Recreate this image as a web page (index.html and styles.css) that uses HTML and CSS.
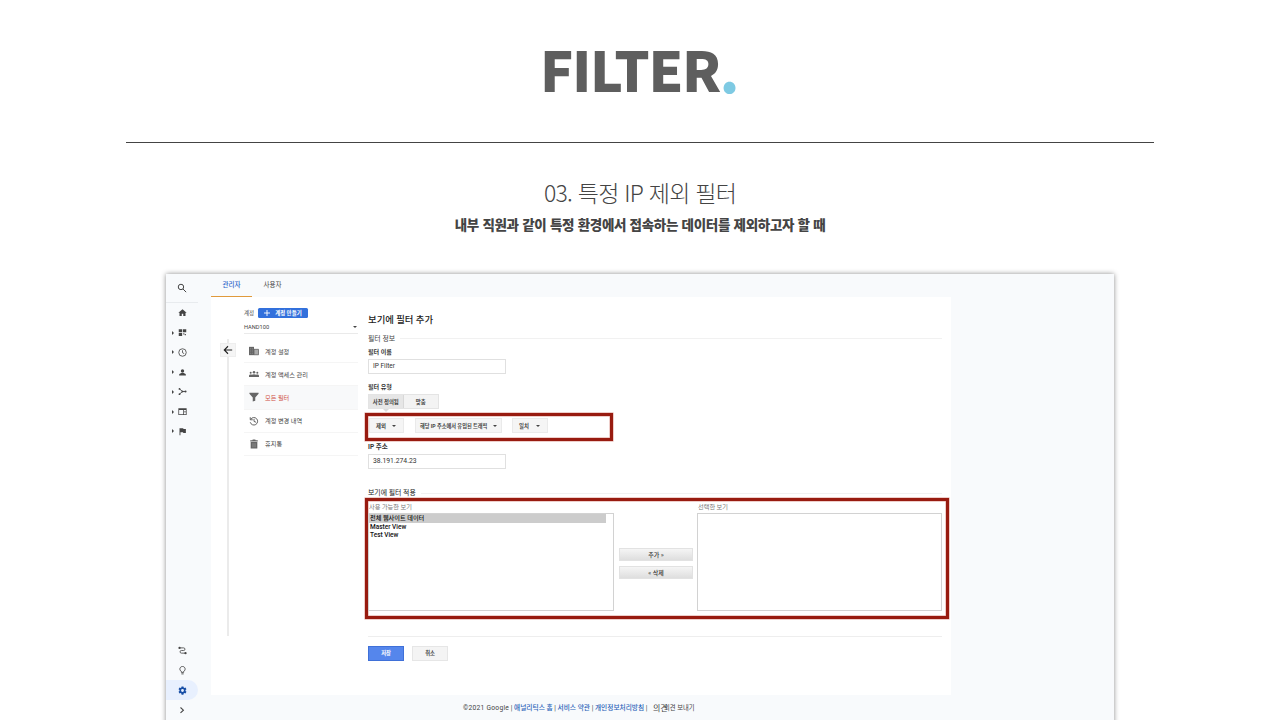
FILE: index.html
```html
<!DOCTYPE html>
<html lang="ko">
<head>
    <meta charset="UTF-8" />
    <meta name="viewport" content="width=device-width, initial-scale=1.0" />
    <title>FILTER</title>
    <link rel="stylesheet" href="styles.css">
</head>
<body>
    <header class="slide-header">
        <h1 class="slide-title">FILTER<span class="dot">.</span></h1>
    </header>
    <div class="slide-sub">
        <h2>03. 특정 IP 제외 필터</h2>
        <p>내부 직원과 같이 특정 환경에서 접속하는 데이터를 제외하고자 할 때</p>
    </div>

    <div class="app">
        <nav class="sidebar">
            <div class="side-search">
                <svg width="10" height="10" viewBox="0 0 24 24" fill="none" stroke="#444" stroke-width="2.4"><circle cx="9.5" cy="9.5" r="6.5"/><path d="M14.5 14.5L22 22"/></svg>
            </div>
            <div class="side-item no-arrow"><svg viewBox="0 0 24 24"><path d="M12 3L1 12.5h3V21h6v-6h4v6h6v-8.5h3z"/></svg></div>
            <div class="side-item"><svg viewBox="0 0 24 24"><path d="M2 3h9v8H2zM13 3h9v8h-9zM2 13h9v8H2zM14 14h3v3h-3zM18 16h3v3h-3z"/></svg></div>
            <div class="side-item"><svg viewBox="0 0 24 24" fill="none" stroke="#444" stroke-width="2.2"><circle cx="12" cy="12" r="10"/><path d="M12 6v6.5l4.5 2.5"/></svg></div>
            <div class="side-item"><svg viewBox="0 0 24 24"><circle cx="12" cy="8" r="4.5"/><path d="M3 20v-2c0-3 5-4.5 9-4.5s9 1.5 9 4.5v2z"/></svg></div>
            <div class="side-item"><svg viewBox="0 0 24 24"><path d="M4 5l8 7-8 7M12 12h8" fill="none" stroke="#444" stroke-width="2.4"/><circle cx="4" cy="5" r="2.5"/><circle cx="4" cy="19" r="2.5"/><circle cx="12" cy="12" r="2.5"/><circle cx="20" cy="12" r="2.8"/></svg></div>
            <div class="side-item"><svg viewBox="0 0 24 24"><path d="M1 3h22v18H1zm2 5v11h11V8zm13 0v4h5V8zm0 6v5h5v-5z" fill-rule="evenodd"/></svg></div>
            <div class="side-item"><svg viewBox="0 0 24 24"><path d="M4 3h10l.5 2H21v11h-7l-.5-2H6.5v8H4z"/></svg></div>
            <div class="side-bottom">
                <div class="side-item no-arrow"><svg viewBox="0 0 24 24"><path d="M4 5h11a3.5 3.5 0 0 1 0 7H9a3.5 3.5 0 0 0 0 7h11" fill="none" stroke="#444" stroke-width="2.2"/><circle cx="4" cy="5" r="3"/><circle cx="20" cy="19" r="3"/></svg></div>
                <div class="side-item no-arrow"><svg viewBox="0 0 24 24" fill="none" stroke="#444" stroke-width="2.4"><path d="M9 17v-2.5a7 7 0 1 1 6 0V17zM9 21h6"/></svg></div>
                <div class="side-item no-arrow active"><svg viewBox="0 0 24 24"><path fill="#174ea6" fill-rule="evenodd" d="M9.5 1h5l.6 3.2 1.900 1.100 3-1.100 2.600 4.400-2.500 2.100v2.600l2.500 2.100-2.600 4.400-3-1.100-1.900 1.100-.6 3.200h-5l-.6-3.200L7 18.700l-3 1.100-2.600-4.400 2.500-2.100v-2.600L1.400 8.600 4 4.200l3 1.100 1.900-1.100zM12 8.200a3.800 3.800 0 1 0 0 7.600 3.800 3.800 0 0 0 0-7.600z"/></svg></div>
                <div class="side-item no-arrow last"><svg viewBox="0 0 24 24" fill="none" stroke="#444" stroke-width="2.6"><path d="M6 6l7 6.5L6 19"/></svg></div>
            </div>
        </nav>

        <main class="main">
            <div class="tabs">
                <div class="tab tab--active">관리자</div>
                <div class="tab">사용자</div>
            </div>
            <div class="panel">
                <div class="back-col">
                    <div class="back-btn"><svg width="10" height="10" viewBox="0 0 24 24" fill="none" stroke="#222" stroke-width="2.6"><path d="M22 12H3M12 3l-9 9 9 9"/></svg></div>
                </div>
                <div class="account">
                    <div class="account-head">
                        <span>계정</span>
                        <div class="create-btn"><svg width="6" height="6" viewBox="0 0 6 6"><path d="M3 0v6M0 3h6" stroke="#fff" stroke-width=".9"/></svg>계정 만들기</div>
                    </div>
                    <div class="account-select"><span>HAND100</span><i class="caret"></i></div>
                    <ul class="menu">
                        <li><svg viewBox="0 0 24 24"><path d="M0 2h12v20H0z"/><path d="M12 8h11v13H12z" fill="#aaa" stroke="#666" stroke-width="2"/><path d="M3 6h6M3 10h6M3 14h6M3 18h6" stroke="#999" stroke-width="1.5" stroke-dasharray="2 2"/></svg>계정 설정</li>
                        <li><svg viewBox="0 0 24 24"><circle cx="12" cy="8" r="3"/><circle cx="4" cy="9" r="2.4"/><circle cx="20" cy="9" r="2.4"/><path d="M0 19v-3c0-3 5-4 7-2 2-2 8-2 10 0 2-2 7-1 7 2v3z"/></svg>계정 액세스 관리</li>
                        <li class="selected"><svg viewBox="0 0 24 24"><path d="M1 2h22v2l-8 9v8l-6 2V13L1 4z"/></svg>모든 필터</li>
                        <li><svg viewBox="0 0 24 24"><path d="M4 8a9 9 0 1 1-1 7M3 3v6h6M12 7v6l5 2" fill="none" stroke="#555" stroke-width="2.2"/></svg>계정 변경 내역</li>
                        <li><svg viewBox="0 0 24 24"><path d="M3 3h5l1-2h6l1 2h5v3H3zM4 7h16v16H4z"/><path d="M9 10v10M12 10v10M15 10v10" stroke="#aaa"/></svg>휴지통</li>
                    </ul>
                </div>

                <div class="form">
                    <div class="form-title">보기에 필터 추가</div>
                    <div class="section section--info"><span>필터 정보</span></div>
                    <div class="label">필터 이름</div>
                    <div class="input">IP Filter</div>
                    <div class="label label--type">필터 유형</div>
                    <div class="toggle">
                        <div class="toggle-item on">사전 정의됨</div>
                        <div class="toggle-item">맞춤</div>
                    </div>
                    <div class="red-box red-box--conditions">
                        <div class="dropdown dd-1">제외<i class="caret"></i></div>
                        <div class="dropdown dd-2">해당 IP 주소에서 유입된 트래픽<i class="caret"></i></div>
                        <div class="dropdown dd-3">일치<i class="caret"></i></div>
                    </div>
                    <div class="label label--ip">IP 주소</div>
                    <div class="input input--ip">38.191.274.23</div>
                    <div class="section section--apply"><span>보기에 필터 적용</span></div>
                    <div class="red-box red-box--views">
                        <div class="view-col">
                            <div class="view-name">사용 가능한 보기</div>
                            <div class="listbox">
                                <div class="option option--on">전체 웹사이트 데이터</div>
                                <div class="option">Master View</div>
                                <div class="option">Test View</div>
                            </div>
                        </div>
                        <div class="move">
                            <div class="move-btn">추가 »</div>
                            <div class="move-btn">« 삭제</div>
                        </div>
                        <div class="view-col">
                            <div class="view-name">선택한 보기</div>
                            <div class="listbox"></div>
                        </div>
                    </div>
                    <div class="actions">
                        <div class="btn btn--save">저장</div>
                        <div class="btn">취소</div>
                    </div>
                </div>
            </div>
            <footer class="footer">
                <span class="footer-links"><span class="copyright">©2021 Google</span> | <b>애널리틱스 홈</b> | <b>서비스 약관</b> | <b>개인정보처리방침</b> |</span>
                <span class="footer-big">의견</span><span class="footer-send">의견 보내기</span>
            </footer>
        </main>
    </div>
</body>
</html>
```
FILE: styles.css
```css
* {
  box-sizing: border-box;
}

body {
  margin: 0;
  width: 1280px;
  height: 720px;
  overflow: hidden;
  background: #fff;
  color: #444;
  font-family: Roboto, "Noto Sans CJK KR", sans-serif;
  font-size: 6.5px;
}

svg {
  display: block;
  flex: none;
}

/* Slide heading */
.slide-header {
  width: 1028px;
  height: 143px;
  margin: 0 auto;
  border-bottom: 1.5px solid #444;
  text-align: center;
}

.slide-title {
  margin: 0;
  padding-top: 27px;
  font: 900 55.5px/82px "Noto Sans CJK KR", sans-serif;
  letter-spacing: -1.4px;
  text-indent: -2px;
  color: #5e5e5e;
}

.slide-title .dot {
  color: #7ecae3;
}

.slide-sub {
  height: 131px;
  padding-top: 33px;
  text-align: center;
  font-family: "Noto Sans CJK KR", sans-serif;
}

.slide-sub h2 {
  margin: 0;
  font-size: 23px;
  font-weight: 200;
  line-height: 32px;
  letter-spacing: -0.75px;
}

.slide-sub p {
  margin: 6px 0 0;
  font-size: 13.5px;
  font-weight: 800;
  line-height: 20px;
  letter-spacing: -0.3px;
}

/* Analytics window */
.app {
  display: flex;
  width: 948px;
  height: 460px;
  margin: 0 auto;
  background: #f8fafc;
  box-shadow: 0 0 5px rgba(0, 0, 0, 0.45);
}

.sidebar {
  display: flex;
  flex-direction: column;
  width: 45px;
  height: 446px;
}

.side-search {
  width: 32px;
  height: 29px;
  padding: 9px 0 0 11px;
  border-bottom: 1px solid #e8ebee;
}

.side-item {
  display: flex;
  align-items: center;
  width: 32px;
  height: 19.75px;
  padding-left: 6px;
  fill: #444;
}

.side-item::before {
  content: "";
  border-left: 2.5px solid #444;
  border-top: 2px solid transparent;
  border-bottom: 2px solid transparent;
  margin-right: 4px;
}

.side-item.no-arrow::before {
  visibility: hidden;
}

.side-item svg {
  width: 9px;
  height: 9px;
}

.side-bottom {
  margin-top: auto;
}

.side-bottom .side-item {
  height: 20px;
}

.side-item.active {
  background: #e8f0fe;
  border-radius: 0 10px 10px 0;
}

.side-item.last svg {
  width: 10px;
  height: 10px;
}

.main {
  width: 740px;
}

.tabs {
  display: flex;
  height: 23px;
}

.tab {
  width: 41px;
  line-height: 23px;
  text-align: center;
}

.tab--active {
  color: #2a62c9;
  font-weight: 500;
  border-bottom: 1px solid #e09a3c;
}

.panel {
  display: flex;
  height: 398px;
  background: #fff;
}

.back-col {
  width: 33px;
  height: 339px;
  padding: 46px 0 0 9px;
  background: linear-gradient(#ebebeb, #ebebeb) 16px 42px / 2px 297px no-repeat;
}

.back-btn {
  display: flex;
  align-items: center;
  justify-content: center;
  width: 16px;
  height: 14px;
  background: #f5f5f5;
  border: 1px solid #eee;
}

.account {
  width: 114px;
  padding-top: 11px;
}

.account-head {
  display: flex;
  align-items: center;
  height: 10px;
  font-size: 5.5px;
}

.create-btn {
  display: flex;
  align-items: center;
  gap: 5px;
  width: 50px;
  height: 10px;
  margin-left: 4px;
  padding-left: 6px;
  background: #3270dc;
  border-radius: 1.5px;
  color: #fff;
  font-weight: 700;
  white-space: nowrap;
}

.account-select {
  display: flex;
  align-items: center;
  justify-content: space-between;
  height: 16px;
  padding: 2px 1px 0 0;
  border-bottom: 1px solid #eaeaea;
  font-size: 5.7px;
}

.caret {
  border-top: 2.5px solid #444;
  border-left: 2px solid transparent;
  border-right: 2px solid transparent;
}

.menu {
  margin: 6px 0 0;
  padding: 0;
  list-style: none;
}

.menu li {
  display: flex;
  align-items: center;
  gap: 6px;
  height: 23.2px;
  padding-left: 5px;
  border-bottom: 1px solid #f5f5f5;
  font-size: 6.2px;
}

.menu svg {
  width: 10px;
  height: 10px;
  fill: #666;
}

.menu .selected {
  background: #f8f9fa;
  color: #cf4d42;
}

/* Filter form */
.form {
  width: 574px;
  margin-left: 10px;
  padding-top: 14px;
}

.form-title {
  height: 17px;
  margin-bottom: 2px;
  font-size: 9.4px;
  font-weight: 500;
  line-height: 17px;
  color: #222;
}

.section {
  display: flex;
  align-items: center;
  gap: 5px;
  height: 15px;
  font-size: 6.9px;
}

.section::after {
  content: "";
  flex: 1;
  height: 1px;
  margin-top: 2px;
  background: #f1f1f1;
}

.section--apply {
  height: 12px;
  margin-top: 17px;
  color: #222;
}

.label {
  height: 14px;
  font-size: 6.1px;
  font-weight: 700;
  line-height: 14px;
  color: #333;
}

.label--type {
  margin-top: 6px;
}

.label--ip {
  height: 13px;
  line-height: 12px;
  font-size: 6.5px;
}

.input {
  width: 138px;
  height: 15px;
  padding-left: 4px;
  border: 1px solid #e0e0e0;
  font-size: 6.5px;
  line-height: 13px;
  color: #333;
}

.input--ip {
  font-size: 6.8px;
}

.toggle {
  display: flex;
  width: 71px;
  height: 15px;
  border: 1px solid #e4e4e4;
  font-size: 5.4px;
  font-weight: 700;
  line-height: 14px;
  text-align: center;
}

.toggle-item {
  position: relative;
  width: 35px;
  background: #f3f3f3;
}

.toggle-item.on {
  background: #e6e6e6;
  border-right: 1px solid #d8d8d8;
}

.toggle-item.on::after {
  content: "";
  position: absolute;
  left: 14px;
  top: 14px;
  border-top: 3px solid #ddd;
  border-left: 3px solid transparent;
  border-right: 3px solid transparent;
}

.red-box {
  display: flex;
  border: 3px solid #981b10;
  box-shadow: 0 0 0 0.5px rgba(190, 60, 45, 0.5), inset 0 0 0 0.5px rgba(190, 60, 45, 0.5);
}

.red-box--conditions {
  width: 248px;
  height: 28px;
  margin: 4px 0 0 -3px;
  padding: 2px 0 0 1px;
}

.dropdown {
  display: flex;
  align-items: center;
  justify-content: space-between;
  height: 15px;
  padding: 0 7px 0 6px;
  background: #f5f5f5;
  border: 1px solid #eaeaea;
  font-size: 5.4px;
  font-weight: 700;
  white-space: nowrap;
}

.dd-1 {
  width: 35px;
}

.dd-2 {
  width: 87px;
  margin: 0 10px 0 11px;
  padding: 0 4px;
  font-size: 5.2px;
}

.dd-3 {
  width: 36px;
}

.red-box--views {
  width: 584px;
  height: 121px;
  margin-left: -3px;
  padding-top: 1px;
}

.view-col {
  width: 246px;
}

.view-col:last-child {
  width: 245px;
}

.view-name {
  height: 11px;
  padding-left: 1px;
  font-size: 6.2px;
  line-height: 11px;
  color: #777;
}

.listbox {
  height: 98px;
  border: 1px solid #d2d2d2;
  color: #111;
}

.option {
  width: 237px;
  height: 8.5px;
  padding-left: 1px;
  font-size: 6.5px;
  font-weight: 500;
  line-height: 8.5px;
}

.option--on {
  background: #ccc;
  font-size: 6.2px;
}

.move {
  width: 74px;
  margin: 46px 4px 0 5px;
}

.move-btn {
  height: 13px;
  margin-bottom: 5px;
  border: 1px solid #e2e2e2;
  background: linear-gradient(#f5f5f5, #dedede);
  font: 500 6px/11px "Noto Sans CJK KR", sans-serif;
  text-align: center;
  color: #333;
}

.actions {
  display: flex;
  gap: 8px;
  margin-top: 17px;
  padding-top: 9px;
  border-top: 1px solid #eee;
}

.btn {
  width: 36px;
  height: 15px;
  background: #f4f4f4;
  border: 1px solid #e6e6e6;
  font-size: 5.3px;
  font-weight: 700;
  line-height: 13px;
  text-align: center;
}

.btn--save {
  background: #5586ec;
  border-color: #3f70d8;
  color: #fff;
}

.footer {
  display: flex;
  height: 26px;
  padding-left: 252px;
  line-height: 26px;
  font-size: 6.3px;
  white-space: nowrap;
}

.footer-links {
  width: 190px;
  font-size: 6.7px;
}

.copyright {
  letter-spacing: 0.25px;
}

.footer b {
  font-weight: 500;
  color: #2a62b8;
}

.footer-big {
  width: 11px;
  font-size: 8px;
  line-height: 28px;
}
```
